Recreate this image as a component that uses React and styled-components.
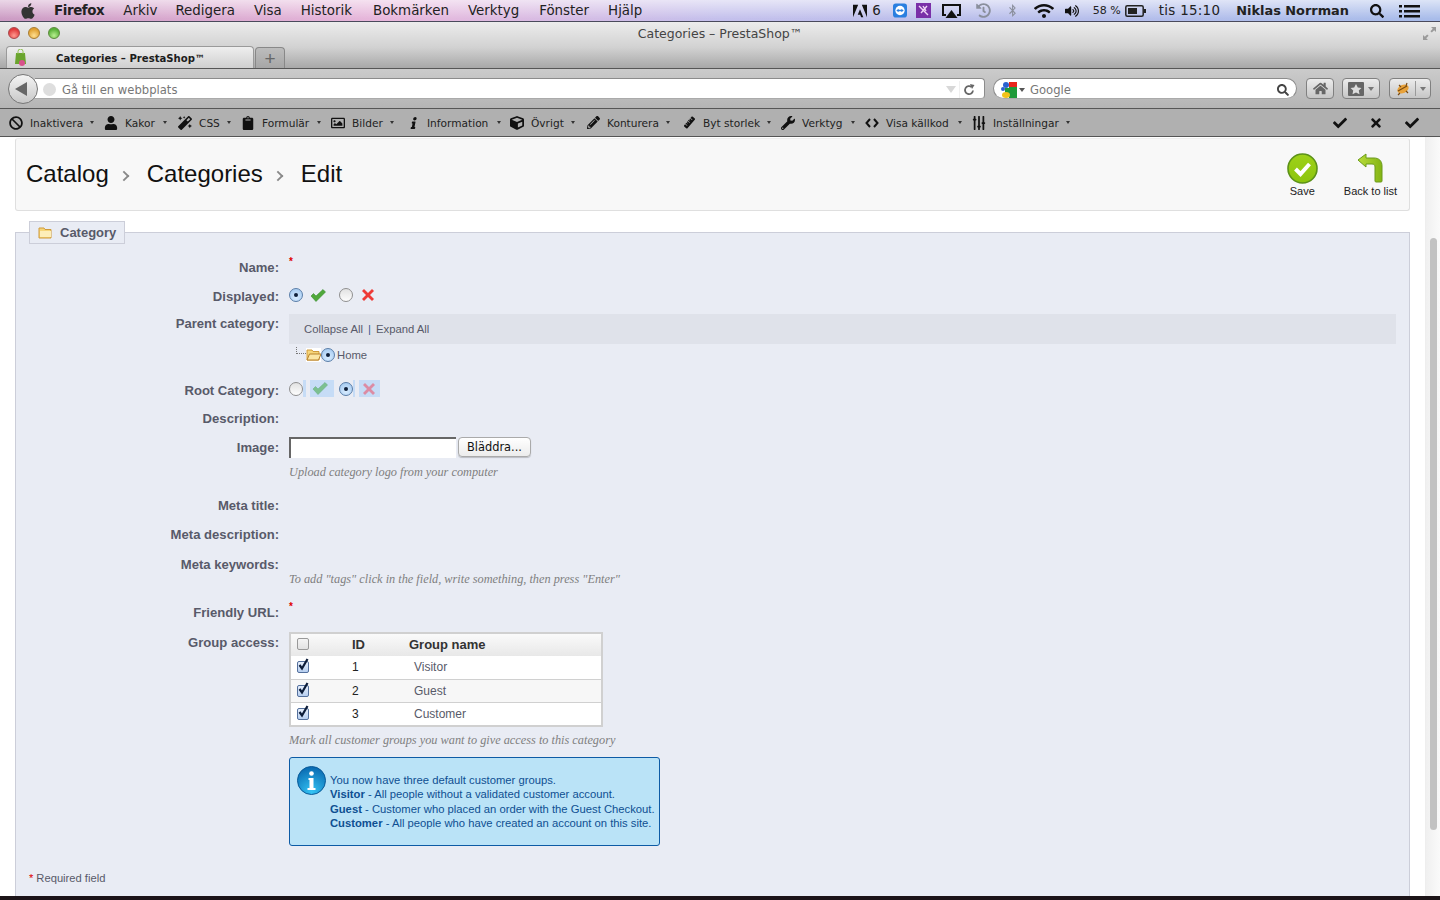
import React from 'react';
import styled, { createGlobalStyle } from 'styled-components';
import { FaApple, FaBan, FaUser, FaMagic, FaClipboard, FaRegImage, FaInfo, FaCube, FaPencilAlt, FaRuler, FaWrench, FaSlidersH, FaCheck, FaTimes, FaBluetoothB, FaWifi, FaVolumeUp, FaSearch, FaHome, FaHistory } from 'react-icons/fa';
import { SiAdobe } from 'react-icons/si';

const GlobalStyle = createGlobalStyle`
	html, body {
		margin: 0;
		padding: 0;
		overflow: hidden;
		background: #fff;
	}
	* {
		box-sizing: border-box;
	}
`;

const Screen = styled.div`
	width: 1440px;
	height: 900px;
	display: flex;
	flex-direction: column;
	overflow: hidden;
	font-family: "Liberation Sans", Arial, sans-serif;
`;

const MenuBar = styled.div`
	flex: 0 0 22px;
	display: flex;
	align-items: center;
	padding-left: 19px;
	font-family: "DejaVu Sans", sans-serif;
	font-size: 13.4px;
	color: #222;
	border-bottom: 1px solid #4a4a5c;
	background:
		linear-gradient(to bottom, rgba(255, 255, 255, 0.6), rgba(255, 255, 255, 0) 90%),
		linear-gradient(to right, #cc9cc4 0, #e8b8dc 400px, #c4c0ec 720px, #a8bcea 100%);
`;

const MenuItem = styled.span`
	margin-left: ${p => p.$ml}px;
	font-weight: ${p => p.$bold ? 700 : 400};
	font-size: ${p => p.$size ? `${p.$size}px` : 'inherit'};
	letter-spacing: ${p => p.$track || 0}px;
	white-space: nowrap;
	display: flex;
	align-items: center;
`;

const MenuSpacer = styled.div`
	flex: 1;
`;

const TitleBar = styled.div`
	flex: 0 0 46px;
	display: flex;
	flex-direction: column;
	border-bottom: 1px solid #565656;
	background: linear-gradient(to bottom, #ececec, #d2d2d2 55%, #a8a8a8);
`;

const TitleRow = styled.div`
	flex: 0 0 24px;
	display: flex;
	align-items: center;
	padding: 0 3px 2px 8px;
`;

const Light = styled.span`
	width: 12px;
	height: 12px;
	margin-right: 8px;
	border-radius: 50%;
	border: 1px solid ${p => p.$edge};
	background: radial-gradient(circle at 50% 75%, ${p => p.$glow}, ${p => p.$color} 70%);
`;

const WindowTitle = styled.div`
	flex: 1;
	text-align: center;
	padding-right: 50px;
	font-family: "DejaVu Sans", sans-serif;
	font-size: 12.5px;
	color: #444;
`;

const TabRow = styled.div`
	flex: 1;
	display: flex;
	align-items: flex-end;
	padding-left: 6px;
`;

const ActiveTab = styled.div`
	width: 248px;
	height: 22px;
	display: flex;
	align-items: center;
	padding: 1px 0 0 7px;
	border: 1px solid #9a9a9a;
	border-bottom: 0;
	border-radius: 4px 4px 0 0;
	background: linear-gradient(to bottom, #efefef, #cfcfcf);
	font-family: "DejaVu Sans", sans-serif;
	font-size: 10.1px;
	font-weight: 700;
	color: #1c1c1c;
`;

const TabTitle = styled.span`
	margin-left: 28px;
`;

const NewTab = styled.div`
	width: 30px;
	height: 21px;
	margin-left: 1px;
	display: flex;
	align-items: center;
	justify-content: center;
	border: 1px solid #888;
	border-bottom: 0;
	border-radius: 4px 4px 0 0;
	background: linear-gradient(to bottom, #bdbdbd, #a6a6a6);
	color: #666;
	font-size: 19px;
	line-height: 1;
	font-family: "Liberation Sans", sans-serif;
`;

const NavBar = styled.div`
	flex: 0 0 40px;
	display: flex;
	align-items: center;
	padding: 0 9px 0 8px;
	border-bottom: 1px solid #565656;
	background: linear-gradient(to bottom, #cbcbcb, #b5b5b5);
`;

const BackButton = styled.div`
	width: 30px;
	height: 30px;
	position: relative;
	z-index: 1;
	display: flex;
	align-items: center;
	justify-content: center;
	border-radius: 50%;
	border: 1px solid #777;
	background: linear-gradient(to bottom, #f4f4f4, #c8c8c8);
`;

const BackArrow = styled.span`
	width: 0;
	height: 0;
	margin-right: 4px;
	border-style: solid;
	border-width: 7px 12px 7px 0;
	border-color: transparent #666 transparent transparent;
`;

const UrlField = styled.div`
	width: 950px;
	height: 21px;
	margin-left: -3px;
	display: flex;
	align-items: center;
	padding: 2px 9px 0 8px;
	background: #fff;
	border: 1px solid #8c8c8c;
	border-left: 0;
	border-bottom-color: #aaa;
	border-radius: 0 4px 4px 0;
	font-family: "DejaVu Sans", sans-serif;
	font-size: 11.6px;
	color: #777;
`;

const Globe = styled.span`
	width: 13px;
	height: 13px;
	margin-right: 6px;
	border-radius: 50%;
	background: #dedede;
`;

const DropTriangle = styled.span`
	width: 0;
	height: 0;
	margin-left: auto;
	border-style: solid;
	border-width: 7px 5px 0 5px;
	border-color: #d8d8d8 transparent transparent transparent;
`;

const UrlDivider = styled.span`
	width: 1px;
	height: 17px;
	margin: 0 3px 0 3px;
	background: #f0f0f0;
`;

const SearchField = styled.div`
	width: 304px;
	height: 21px;
	margin-left: 8px;
	display: flex;
	align-items: center;
	padding: 2px 7px 0 7px;
	background: #fff;
	border: 1px solid #8c8c8c;
	border-bottom-color: #aaa;
	border-radius: 11px;
	font-family: "DejaVu Sans", sans-serif;
	font-size: 11.6px;
	color: #777;
`;

const SmallCaret = styled.span`
	width: 0;
	height: 0;
	margin-left: ${p => p.$ml ?? 2}px;
	margin-right: ${p => p.$mr ?? 0}px;
	border-style: solid;
	border-width: 4px 3px 0 3px;
	border-color: ${p => p.$color || '#555'} transparent transparent transparent;
`;

const NavButton = styled.div`
	width: ${p => p.$w}px;
	height: 21px;
	margin-left: ${p => p.$ml}px;
	display: flex;
	align-items: center;
	justify-content: center;
	gap: 4px;
	border: 1px solid #808080;
	border-radius: 4px;
	background: linear-gradient(to bottom, #ececec, #c6c6c6);
`;

const ButtonDivider = styled.span`
	width: 1px;
	height: 15px;
	background: #9a9a9a;
`;

const ToolBar = styled.div`
	flex: 0 0 28px;
	display: flex;
	align-items: center;
	padding-left: 9px;
	border-bottom: 1px solid #555;
	background: #b0b0b0;
	font-family: "DejaVu Sans", sans-serif;
	font-size: 10.6px;
	color: #222;
`;

const ToolItem = styled.div`
	display: flex;
	align-items: center;
	width: ${p => p.$w}px;
	white-space: nowrap;
`;

const ToolIcon = styled.span`
	flex: 0 0 ${p => p.$w}px;
	display: flex;
	justify-content: center;
	color: #111;
`;

const ToolLabel = styled.span`
	flex: 0 0 auto;
	margin-left: 7px;
	min-width: ${p => p.$w}px;
`;

const ToolCaret = styled.span`
	width: 0;
	height: 0;
	margin-left: 7px;
	border-style: solid;
	border-width: 3px 2.5px 0 2.5px;
	border-color: #333 transparent transparent transparent;
`;

const ToolActions = styled.div`
	margin-left: auto;
	display: flex;
	gap: 22px;
	padding-right: 21px;
	color: #111;
	font-size: 14px;
`;

const SlantInfo = styled(FaInfo)`
	transform: skewX(-12deg);
`;

const UprightSliders = styled(FaSlidersH)`
	transform: rotate(90deg);
`;

const SteepRuler = styled(FaRuler)`
	transform: rotate(-20deg);
`;

const Viewport = styled.div`
	flex: 1;
	min-height: 0;
	display: flex;
	overflow: hidden;
	background: #fff;
`;

const Page = styled.main`
	width: 1425px;
	padding: 1px 15px 0 15px;
`;

const PageHead = styled.header`
	height: 73px;
	display: flex;
	align-items: center;
	justify-content: space-between;
	padding: 0 12px 0 10px;
	background: #f8f8f8;
	border: 1px solid #dfdfdf;
	border-top-color: #eee;
	border-radius: 3px;
`;

const Crumbs = styled.h1`
	margin: 0 0 1px;
	display: flex;
	align-items: center;
	font-size: 24px;
	font-weight: 400;
	color: #111;
`;

const CrumbSep = styled.span`
	width: 8px;
	height: 8px;
	margin: 3px 19px 0 11px;
	border-top: 2.5px solid #888;
	border-right: 2.5px solid #888;
	transform: rotate(45deg) scale(0.95);
`;

const HeadActions = styled.div`
	display: flex;
	gap: 26px;
`;

const HeadAction = styled.a`
	display: flex;
	flex-direction: column;
	align-items: center;
	font-size: 11px;
	color: #222;
	gap: 1px;
`;

const Fieldset = styled.fieldset`
	margin: 10px 0 0;
	padding: 15px 13px 0 0;
	height: 720px;
	background: #e9ecf4;
	border: 1px solid #ccced9;
	min-inline-size: 0;
`;

const Legend = styled.legend`
	display: flex;
	align-items: center;
	gap: 7px;
	width: 96px;
	height: 23px;
	margin-left: 13px;
	padding: 0 0 0 8px;
	background: #e9ecf4;
	border: 1px solid #ccced9;
	font-size: 13px;
	font-weight: 700;
	color: #585a69;
`;

const Row = styled.div`
	display: grid;
	grid-template-columns: 263px 1fr;
	column-gap: 10px;
	min-height: ${p => p.$h}px;
`;

const Label = styled.label`
	padding-top: 1px;
	text-align: right;
	font-size: 13.1px;
	line-height: 16px;
	font-weight: 700;
	color: #585a69;
`;

const Value = styled.div`
	display: flex;
	flex-direction: column;
	min-width: 0;
	margin-top: ${p => p.$mt || 0}px;
`;

const Inline = styled.div`
	display: flex;
	align-items: center;
	height: ${p => p.$h || 16}px;
`;

const Required = styled.span`
	margin-top: -2px;
	color: #e00000;
	font-size: 10px;
	line-height: 10px;
	font-weight: 700;
	align-self: flex-start;
`;

const Radio = styled.span`
	flex: none;
	width: 14px;
	height: 14px;
	display: flex;
	align-items: center;
	justify-content: center;
	border-radius: 50%;
	border: 1px solid ${p => p.$on ? '#5a7ea8' : '#8f8f8f'};
	background: ${p => p.$on
		? 'radial-gradient(circle at 50% 70%, #d8ecff, #a9cdf2 80%)'
		: 'linear-gradient(to bottom, #e2e2e2, #fdfdfd)'};
	&::after {
		content: "";
		display: ${p => p.$on ? 'block' : 'none'};
		width: 4px;
		height: 4px;
		border-radius: 50%;
		background: #10203a;
	}
`;

const Gap = styled.span`
	flex: none;
	width: ${p => p.$w}px;
`;

const Selected = styled.span`
	flex: none;
	display: flex;
	align-items: center;
	width: ${p => p.$w}px;
	height: 17px;
	padding-left: ${p => p.$pad || 0}px;
	background: #c6dcf6;
`;

const TreeBar = styled.div`
	height: 30px;
	margin-top: -1px;
	display: flex;
	align-items: center;
	padding-left: 15px;
	background: #dfe2ea;
	font-size: 11.3px;
	color: #585a69;
`;

const TreeSep = styled.span`
	margin: 0 5px;
	color: #3a5a90;
`;

const TreeRow = styled.div`
	display: flex;
	align-items: center;
	height: 22px;
	padding-left: 7px;
	font-size: 11.3px;
	color: #585a69;
`;

const TreeLine = styled.span`
	width: 10px;
	height: 7px;
	margin-top: -9px;
	border-left: 1px dotted #777;
	border-bottom: 1px dotted #777;
`;

const FolderWrap = styled.span`
	width: 15px;
	height: 14px;
	display: flex;
	background: #fff;
`;

const HomeLabel = styled.span`
	margin-left: 2px;
`;

const FileRow = styled.div`
	display: flex;
	align-items: center;
	margin-top: -3px;
	height: 22px;
`;

const FileInput = styled.span`
	width: 167px;
	height: 21px;
	background: #fff;
	border-top: 2px solid #666;
	border-left: 2px solid #666;
`;

const BrowseButton = styled.button.attrs({
	type: 'button'
})`
	width: 73px;
	height: 20px;
	margin-left: 2px;
	padding: 0;
	border: 1px solid #aaa;
	border-radius: 4px;
	background: linear-gradient(to bottom, #fff, #ececec);
	font-family: "DejaVu Sans", sans-serif;
	font-size: 11.4px;
	color: #111;
	box-shadow: 0 1px 1px rgba(0, 0, 0, 0.2);
`;

const Hint = styled.p`
	margin: ${p => p.$mt || 0}px 0 0;
	font-family: "Liberation Serif", serif;
	font-style: italic;
	font-size: 12.3px;
	line-height: 16px;
	color: #7f7f7f;
`;

const GroupTable = styled.table`
	width: 314px;
	height: 95px;
	border-collapse: collapse;
	border: 2px solid #d0d0d0;
	background: #fff;
	font-size: 12px;
	color: #585a69;
`;

const HeadCell = styled.th`
	height: 23px;
	padding: 0 0 2px ${p => p.$pad || 0}px;
	text-align: left;
	font-size: 13px;
	color: #333;
	background: linear-gradient(to bottom, #fafafa, #e8e8e8);
`;

const TableRow = styled.tr`
	background: ${p => p.$alt ? '#f7f7f7' : '#fff'};
	border-top: ${p => p.$line ? '1px solid #d0d0d0' : 0};
`;

const Cell = styled.td`
	height: 23px;
	padding: 0 0 0 ${p => p.$pad || 0}px;
	color: ${p => p.$dark ? '#222' : '#585a69'};
`;

const Box = styled.span`
	width: 12px;
	height: 12px;
	display: flex;
	align-items: flex-end;
	justify-content: center;
	border: 1px solid ${p => p.$on ? '#54709c' : '#999'};
	border-radius: 2px;
	background: ${p => p.$on ? 'linear-gradient(to bottom, #e6effc, #b7cff0)' : 'linear-gradient(to bottom, #f4f4f4, #e2e2e2)'};
`;

const InfoBox = styled.div`
	width: 371px;
	height: 89px;
	margin-top: 9px;
	display: flex;
	padding: 8px 0 0 7px;
	background: #bae3f7;
	border: 1px solid #0d5ba5;
	border-radius: 3px;
	font-size: 11.25px;
	line-height: 14.4px;
	color: #0e4f92;
`;

const InfoText = styled.div`
	margin: 7px 0 0 4px;
	white-space: nowrap;
`;

const RequiredNote = styled.p`
	margin: 25px 0 0 13px;
	font-size: 11.2px;
	line-height: 14px;
	color: #585a69;
`;

const RequiredStar = styled.span`
	color: #e00000;
	margin-right: 3px;
`;

const ScrollTrack = styled.div`
	width: 15px;
	padding: 101px 3px 0 4px;
	border-left: 1px solid #eee;
	background: linear-gradient(to right, #f0f0f0, #fafafa);
`;

const ScrollThumb = styled.div`
	height: 592px;
	border-radius: 4px;
	background: #c2c2c2;
`;

const Desktop = styled.div`
	flex: 0 0 4px;
	background: #1c1418;
`;

const Favicon = () => (
	<svg width="14" height="18" viewBox="0 0 14 18">
		<path d="M2 4h9l1 11H1z" fill="#6aa42e" />
		<path d="M4 5V2.500a2.500 2.500 0 0 1 5 0V5" fill="none" stroke="#8ec04e" strokeWidth="1" />
		<circle cx="8" cy="14" r="3" fill="#d8528c" />
	</svg>
);

const GoogleIcon = () => (
	<svg width="16" height="16" viewBox="0 0 16 16">
		<rect x="8" width="8" height="5" fill="#e8261c" />
		<rect x="8" y="5" width="8" height="11" fill="#1f9a3a" />
		<rect x="4" y="6" width="5" height="5" fill="#1f9a3a" />
		<circle cx="5" cy="3" r="3" fill="#2a62d0" />
		<circle cx="2" cy="7" r="2" fill="#2a62d0" />
		<ellipse cx="5" cy="13" rx="4" ry="3" fill="#f2c21a" />
	</svg>
);

const StarBox = () => (
	<svg width="16" height="14" viewBox="0 0 16 14">
		<rect width="16" height="14" rx="1" fill="#666" />
		<path d="M8 2l1.800 3.400 3.700.5-2.700 2.600.7 3.700L8 10.400l-3.500 1.800.7-3.700L2.500 5.900l3.700-.5z" fill="#ddd" />
	</svg>
);

const BugIcon = () => (
	<svg width="16" height="14" viewBox="0 0 16 14">
		<ellipse cx="8" cy="7" rx="6" ry="4" transform="rotate(-25 8 7)" fill="#e8a23a" />
		<path d="M3 9l9-5M5 11l-2 2M11 9l2 2M4 3l2 2M12 1l-1 3" stroke="#7a4a10" strokeWidth="1.200" />
	</svg>
);

const CodeIcon = () => (
	<svg width="14" height="10" viewBox="0 0 14 10">
		<path d="M5 1L1.500 5 5 9M9 1l3.500 4L9 9" fill="none" stroke="#111" strokeWidth="2" />
	</svg>
);

const Battery = () => (
	<svg width="21" height="12" viewBox="0 0 21 12">
		<rect x="0.800" y="0.800" width="17.400" height="10.400" rx="1.500" fill="none" stroke="#222" strokeWidth="1.500" />
		<rect x="3" y="3" width="9" height="6" fill="#222" />
		<rect x="19" y="4" width="2" height="4" fill="#222" />
	</svg>
);

const TeamViewer = () => (
	<svg width="14" height="15" viewBox="0 0 15 15">
		<rect width="15" height="15" rx="3" fill="#2a7fe0" />
		<circle cx="7.500" cy="7.500" r="5" fill="#fff" />
		<path d="M3.500 7.500l2.500-2v1.200h3V5.500l2.500 2-2.500 2V8.300h-3v1.200z" fill="#2a7fe0" />
	</svg>
);

const PurpleApp = () => (
	<svg width="15" height="15" viewBox="0 0 15 15">
		<rect width="15" height="15" fill="#7a30a8" />
		<path d="M3 3l9 9M11 3L5 10M7 3l3 5" stroke="#f0d8f6" strokeWidth="1.400" />
	</svg>
);

const AirPlay = () => (
	<svg width="19" height="14" viewBox="0 0 19 14">
		<path d="M4 11H1V1h17v10h-3" fill="none" stroke="#111" strokeWidth="2" />
		<path d="M9.500 6l6 8h-12z" fill="#111" />
	</svg>
);

const ListIcon = () => (
	<svg width="21" height="14" viewBox="0 0 21 14">
		<path d="M0 1h3v2.400H0zM5 1h16v2.400H5zM0 6h3v2.400H0zM5 6h16v2.400H5zM0 11h3v2.400H0zM5 11h16v2.400H5z" fill="#111" />
	</svg>
);

const Expand = () => (
	<svg width="15" height="15" viewBox="0 0 15 15">
		<path d="M9 1h5v5l-1.800-1.800-2.400 2.400-1.400-1.400 2.400-2.400zM6 14H1V9l1.800 1.800 2.400-2.400 1.400 1.400-2.400 2.400z" fill="#9a9a9a" />
	</svg>
);

const Reload = () => (
	<svg width="12" height="12" viewBox="0 0 12 12">
		<path d="M10 6.500A4 4 0 1 1 8.600 3" fill="none" stroke="#666" strokeWidth="1.800" />
		<path d="M7 0l4.500 1L9 5z" fill="#666" />
	</svg>
);

const SaveIcon = () => (
	<svg width="31" height="31" viewBox="0 0 31 31">
		<defs>
			<linearGradient id="saveFill" x1="0" y1="0" x2="0" y2="1">
				<stop offset="0" stopColor="#9ed218" />
				<stop offset="1" stopColor="#8cc40e" />
			</linearGradient>
		</defs>
		<circle cx="15.500" cy="15.500" r="14.500" fill="url(#saveFill)" stroke="#5c9218" strokeWidth="1.600" />
		<path d="M8.500 16l5 5 9-10" fill="none" stroke="#fff" strokeWidth="4" />
	</svg>
);

const BackIcon = () => (
	<svg width="26" height="31" viewBox="0 0 26 31">
		<defs>
			<linearGradient id="backFill" x1="0" y1="0" x2="1" y2="0">
				<stop offset="0" stopColor="#b8dc3a" />
				<stop offset="1" stopColor="#84b414" />
			</linearGradient>
		</defs>
		<path d="M1 7l8-6v4h8c5 0 8 3 8 8v15a1 1 0 0 1-1 1h-5a1 1 0 0 1-1-1V14c0-2-1-3-3-3H9v3z" fill="url(#backFill)" stroke="#6b9a1a" strokeWidth="1" />
	</svg>
);

const FolderIcon = ({ open }) => (
	<svg width="15" height="13" viewBox="0 0 15 13">
		<path d="M1 2h5l1 1.500h6V12H1z" fill="#f6d67a" stroke="#cf9a3a" />
		{open
			? <path d="M1 12l2.500-6H15l-2.500 6z" fill="#fbe6a4" stroke="#b9822a" />
			: <rect x="2" y="5" width="11" height="6" fill="#fdeeb8" />}
	</svg>
);

const TickIcon = ({ faded }) => (
	<svg width="16" height="13" viewBox="0 0 16 13">
		<path d="M1 7l2.500-2.500L6 7l7-6.500L15.500 3 6 12.500z" fill={faded ? '#7cc090' : '#4fa83a'} stroke={faded ? '#6ab088' : '#3b8a30'} strokeWidth="0.600" />
	</svg>
);

const CrossIcon = ({ faded }) => (
	<svg width="14" height="14" viewBox="0 0 14 14">
		<path d="M1 3l2-2 4 4 4-4 2 2-4 4 4 4-2 2-4-4-4 4-2-2 4-4z" fill={faded ? '#dc8ca4' : '#ee3a36'} />
	</svg>
);

const BoxTick = () => (
	<svg width="13" height="14" viewBox="0 0 13 14" overflow="visible">
		<path d="M2.500 7l2.500 3.500L10.500 1" fill="none" stroke="#0c1c38" strokeWidth="2.200" />
	</svg>
);

const InfoIcon = () => (
	<svg width="29" height="29" viewBox="0 0 29 29" style={{ flex: 'none' }}>
		<defs>
			<radialGradient id="infoFill" cx="0.5" cy="0.9" r="0.9">
				<stop offset="0" stopColor="#34c4f4" />
				<stop offset="1" stopColor="#0868b0" />
			</radialGradient>
		</defs>
		<circle cx="14.500" cy="14.500" r="14" fill="url(#infoFill)" stroke="#0a5a98" />
		<circle cx="14.500" cy="7.500" r="2.300" fill="#fff" />
		<path d="M11.500 12h5v10h2v2h-8v-2h2v-8h-1z" fill="#fff" />
	</svg>
);

const menus = [
	['Arkiv', 19], ['Redigera', 18], ['Visa', 19], ['Historik', 19],
	['Bokmärken', 21], ['Verktyg', 19], ['Fönster', 20], ['Hjälp', 19]
];

const tools = [
	{ icon: <FaBan size={14} />, label: 'Inaktivera', w: 95, iw: 14, lw: 53 },
	{ icon: <FaUser size={14} />, label: 'Kakor', w: 74, iw: 14, lw: 31 },
	{ icon: <FaMagic size={14} />, label: 'CSS', w: 63, iw: 14, lw: 19 },
	{ icon: <FaClipboard size={14} />, label: 'Formulär', w: 90, iw: 13, lw: 48 },
	{ icon: <FaRegImage size={14} />, label: 'Bilder', w: 77, iw: 14, lw: 31 },
	{ icon: <SlantInfo size={12} />, label: 'Information', w: 102, iw: 10, lw: 63 },
	{ icon: <FaCube size={14} />, label: 'Övrigt', w: 76, iw: 14, lw: 33 },
	{ icon: <FaPencilAlt size={13} />, label: 'Konturera', w: 97, iw: 14, lw: 52 },
	{ icon: <SteepRuler size={13} />, label: 'Byt storlek', w: 98, iw: 13, lw: 57 },
	{ icon: <FaWrench size={14} />, label: 'Verktyg', w: 84, iw: 14, lw: 42 },
	{ icon: <CodeIcon />, label: 'Visa källkod', w: 107, iw: 14, lw: 65 },
	{ icon: <UprightSliders size={14} />, label: 'Inställningar', iw: 14, lw: 66 }
];

const groups = [
	{ id: 1, name: 'Visitor' },
	{ id: 2, name: 'Guest', alt: true, line: true },
	{ id: 3, name: 'Customer', line: true }
];

const App = () => (
	<Screen>
		<GlobalStyle />
		<MenuBar>
			<FaApple size={18} color="#333" />
			<MenuItem $ml={17} $bold $track={-0.4}>Firefox</MenuItem>
			{menus.map(([name, ml]) => <MenuItem key={name} $ml={ml}>{name}</MenuItem>)}
			<MenuSpacer />
			<MenuItem $ml={0}><SiAdobe size={14} color="#111" /></MenuItem>
			<MenuItem $ml={5}>6</MenuItem>
			<MenuItem $ml={12}><TeamViewer /></MenuItem>
			<MenuItem $ml={9}><PurpleApp /></MenuItem>
			<MenuItem $ml={11}><AirPlay /></MenuItem>
			<MenuItem $ml={15}><FaHistory size={15} color="#8a8f9c" /></MenuItem>
			<MenuItem $ml={15}><FaBluetoothB size={13} color="#8a8f9c" /></MenuItem>
			<MenuItem $ml={15}><FaWifi size={20} color="#111" /></MenuItem>
			<MenuItem $ml={11}><FaVolumeUp size={14} color="#111" /></MenuItem>
			<MenuItem $ml={14} $size={11}>58 %</MenuItem>
			<MenuItem $ml={4}><Battery /></MenuItem>
			<MenuItem $ml={13} $track={0.3}>tis 15:10</MenuItem>
			<MenuItem $ml={16} $bold $size={12.9}>Niklas Norrman</MenuItem>
			<MenuItem $ml={21}><FaSearch size={14} color="#111" /></MenuItem>
			<MenuItem $ml={15}><ListIcon /></MenuItem>
			<MenuItem $ml={20} />
		</MenuBar>

		<TitleBar>
			<TitleRow>
				<Light $color="#e0383a" $glow="#ff9a90" $edge="#a8484c" />
				<Light $color="#e0a030" $glow="#ffdf90" $edge="#a87c30" />
				<Light $color="#58b038" $glow="#b8f090" $edge="#5c8a3c" />
				<WindowTitle>Categories – PrestaShop™</WindowTitle>
				<Expand />
			</TitleRow>
			<TabRow>
				<ActiveTab>
					<Favicon />
					<TabTitle>Categories – PrestaShop™</TabTitle>
				</ActiveTab>
				<NewTab>+</NewTab>
			</TabRow>
		</TitleBar>

		<NavBar>
			<BackButton><BackArrow /></BackButton>
			<UrlField>
				<Globe />
				Gå till en webbplats
				<DropTriangle />
				<UrlDivider />
				<Reload />
			</UrlField>
			<SearchField>
				<GoogleIcon />
				<SmallCaret $mr={5} />
				Google
				<MenuSpacer />
				<FaSearch size={12} color="#444" />
			</SearchField>
			<NavButton $w={28} $ml={9}><FaHome size={15} color="#666" /></NavButton>
			<NavButton $w={38} $ml={8}><StarBox /><SmallCaret $ml={0} $color="#777" /></NavButton>
			<NavButton $w={42} $ml={9}><BugIcon /><ButtonDivider /><SmallCaret $ml={0} $color="#777" /></NavButton>
		</NavBar>

		<ToolBar>
			{tools.map(t => (
				<ToolItem key={t.label} $w={t.w}>
					<ToolIcon $w={t.iw}>{t.icon}</ToolIcon>
					<ToolLabel $w={t.lw}>{t.label}</ToolLabel>
					<ToolCaret />
				</ToolItem>
			))}
			<ToolActions>
				<FaCheck />
				<FaTimes />
				<FaCheck />
			</ToolActions>
		</ToolBar>

		<Viewport>
			<Page>
				<PageHead>
					<Crumbs>
						Catalog<CrumbSep />Categories<CrumbSep />Edit
					</Crumbs>
					<HeadActions>
						<HeadAction><SaveIcon />Save</HeadAction>
						<HeadAction><BackIcon />Back to list</HeadAction>
					</HeadActions>
				</PageHead>

				<Fieldset>
					<Legend><FolderIcon />Category</Legend>

					<Row $h={29}>
						<Label>Name:</Label>
						<Value><Required>*</Required></Value>
					</Row>
					<Row $h={27}>
						<Label>Displayed:</Label>
						<Value>
							<Inline $h={14}>
								<Radio $on />
								<Gap $w={7} />
								<TickIcon />
								<Gap $w={13} />
								<Radio />
								<Gap $w={8} />
								<CrossIcon />
							</Inline>
						</Value>
					</Row>
					<Row $h={67}>
						<Label>Parent category:</Label>
						<Value>
							<TreeBar>Collapse All<TreeSep>|</TreeSep>Expand All</TreeBar>
							<TreeRow>
								<TreeLine />
								<FolderWrap><FolderIcon open /></FolderWrap>
								<Radio $on />
								<HomeLabel>Home</HomeLabel>
							</TreeRow>
						</Value>
					</Row>
					<Row $h={28}>
						<Label>Root Category:</Label>
						<Value $mt={-2}>
							<Inline $h={17}>
								<Radio />
								<Selected $w={3} />
								<Gap $w={4} />
								<Selected $w={21} $pad={2}><TickIcon faded /></Selected>
								<Selected $w={3} />
								<Gap $w={5} />
								<Radio $on />
								<Selected $w={2} />
								<Gap $w={4} />
								<Selected $w={21} $pad={3}><CrossIcon faded /></Selected>
							</Inline>
						</Value>
					</Row>
					<Row $h={29}>
						<Label>Description:</Label>
						<Value />
					</Row>
					<Row $h={58}>
						<Label>Image:</Label>
						<Value>
							<FileRow>
								<FileInput />
								<BrowseButton>Bläddra...</BrowseButton>
							</FileRow>
							<Hint $mt={6}>Upload category logo from your computer</Hint>
						</Value>
					</Row>
					<Row $h={29}>
						<Label>Meta title:</Label>
						<Value />
					</Row>
					<Row $h={30}>
						<Label>Meta description:</Label>
						<Value />
					</Row>
					<Row $h={48}>
						<Label>Meta keywords:</Label>
						<Value><Hint $mt={15}>To add "tags" click in the field, write something, then press "Enter"</Hint></Value>
					</Row>
					<Row $h={30}>
						<Label>Friendly URL:</Label>
						<Value><Required>*</Required></Value>
					</Row>
					<Row>
						<Label>Group access:</Label>
						<Value $mt={-2}>
							<GroupTable>
								<colgroup>
									<col width="62" />
									<col width="57" />
									<col />
								</colgroup>
								<thead>
									<tr>
										<HeadCell $pad={6}><Box /></HeadCell>
										<HeadCell>ID</HeadCell>
										<HeadCell>Group name</HeadCell>
									</tr>
								</thead>
								<tbody>
									{groups.map(g => (
										<TableRow key={g.id} $alt={g.alt} $line={g.line}>
											<Cell $pad={6}><Box $on><BoxTick /></Box></Cell>
											<Cell $dark>{g.id}</Cell>
											<Cell $pad={5}>{g.name}</Cell>
										</TableRow>
									))}
								</tbody>
							</GroupTable>
							<Hint $mt={5}>Mark all customer groups you want to give access to this category</Hint>
							<InfoBox>
								<InfoIcon />
								<InfoText>
									You now have three default customer groups.<br />
									<b>Visitor</b> - All people without a validated customer account.<br />
									<b>Guest</b> - Customer who placed an order with the Guest Checkout.<br />
									<b>Customer</b> - All people who have created an account on this site.
								</InfoText>
							</InfoBox>
						</Value>
					</Row>
					<RequiredNote><RequiredStar>*</RequiredStar>Required field</RequiredNote>
				</Fieldset>
			</Page>
			<ScrollTrack><ScrollThumb /></ScrollTrack>
		</Viewport>
		<Desktop />
	</Screen>
);

export default App;
